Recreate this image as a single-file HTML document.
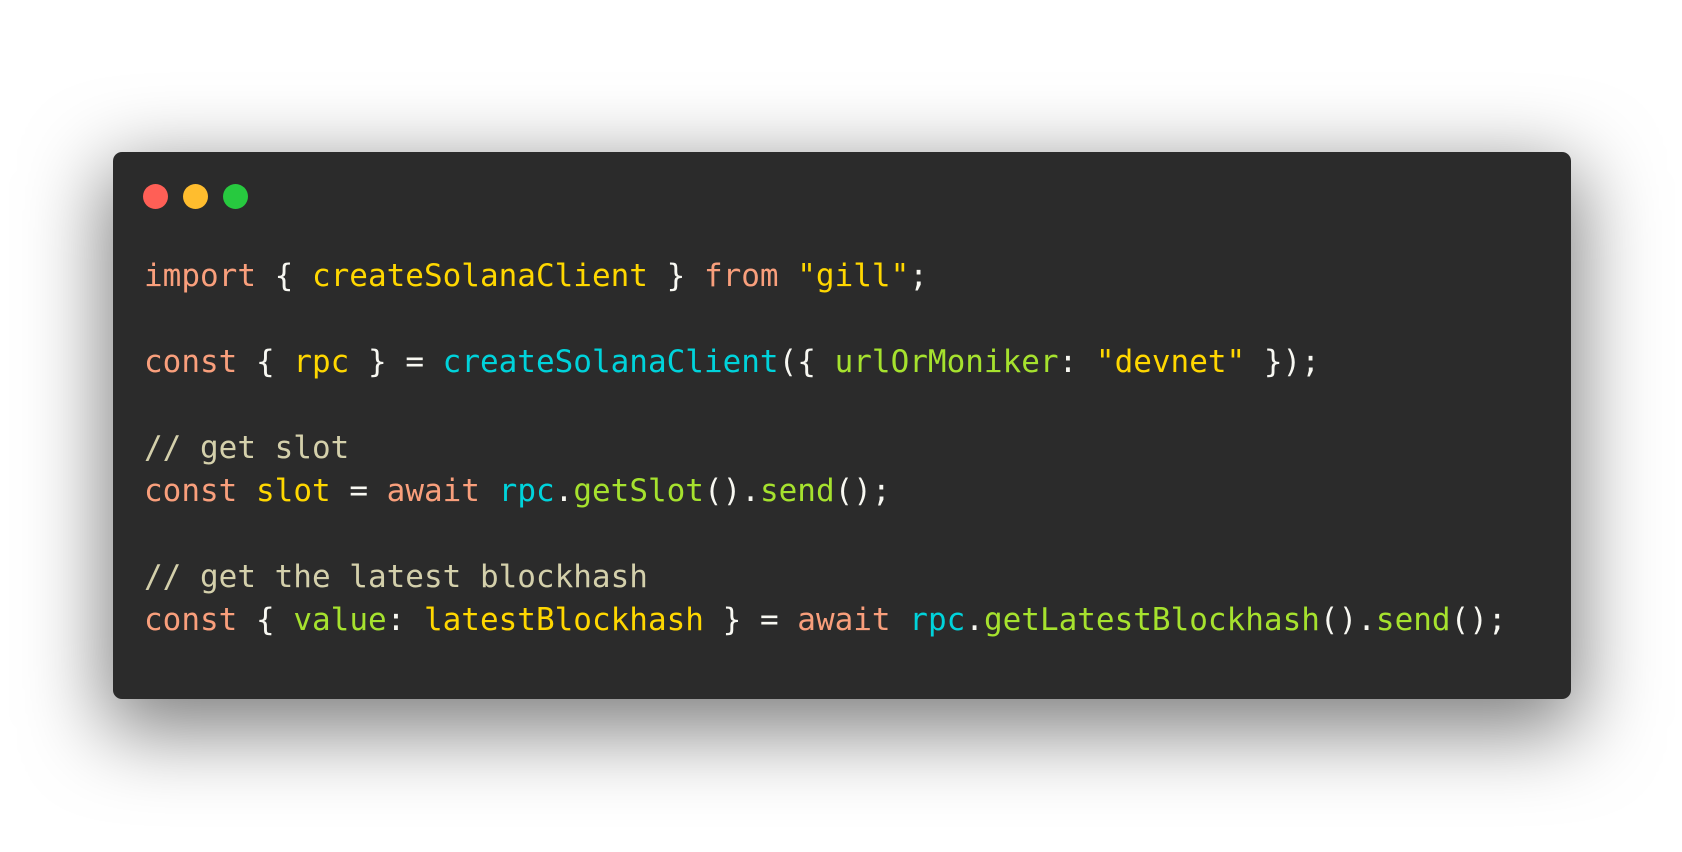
<!DOCTYPE html>
<html><head><style>
html,body{margin:0;padding:0;}
body{width:1682px;height:852px;background:#fff;position:relative;overflow:hidden;}
.win{position:absolute;left:113px;top:152px;width:1458px;height:547px;background:#2b2b2b;border-radius:9px;box-shadow:0 24px 80px 8px rgba(0,0,0,0.5);}
.dot{position:absolute;top:184px;width:25px;height:25px;border-radius:50%;}
pre{position:absolute;left:144px;top:255px;margin:0;font-family:"DejaVu Sans Mono","Liberation Mono",monospace;font-size:31px;line-height:43px;color:#f8f8f2;}
.k{color:#f99f7c}.y{color:#ffd700}.c{color:#00d3db}.g{color:#a6e22e}.m{color:#d4d0ab}
</style></head><body>
<div class="win"></div>
<div class="dot" style="left:143px;background:#ff5f56"></div>
<div class="dot" style="left:183px;background:#ffbd2e"></div>
<div class="dot" style="left:223px;background:#27c93f"></div>
<pre><span class="k">import</span> { <span class="y">createSolanaClient</span> } <span class="k">from</span> <span class="y">"gill"</span>;

<span class="k">const</span> { <span class="y">rpc</span> } = <span class="c">createSolanaClient</span>({ <span class="g">urlOrMoniker</span>: <span class="y">"devnet"</span> });

<span class="m">// get slot</span>
<span class="k">const</span> <span class="y">slot</span> = <span class="k">await</span> <span class="c">rpc</span>.<span class="g">getSlot</span>().<span class="g">send</span>();

<span class="m">// get the latest blockhash</span>
<span class="k">const</span> { <span class="g">value</span>: <span class="y">latestBlockhash</span> } = <span class="k">await</span> <span class="c">rpc</span>.<span class="g">getLatestBlockhash</span>().<span class="g">send</span>();</pre>
</body></html>
